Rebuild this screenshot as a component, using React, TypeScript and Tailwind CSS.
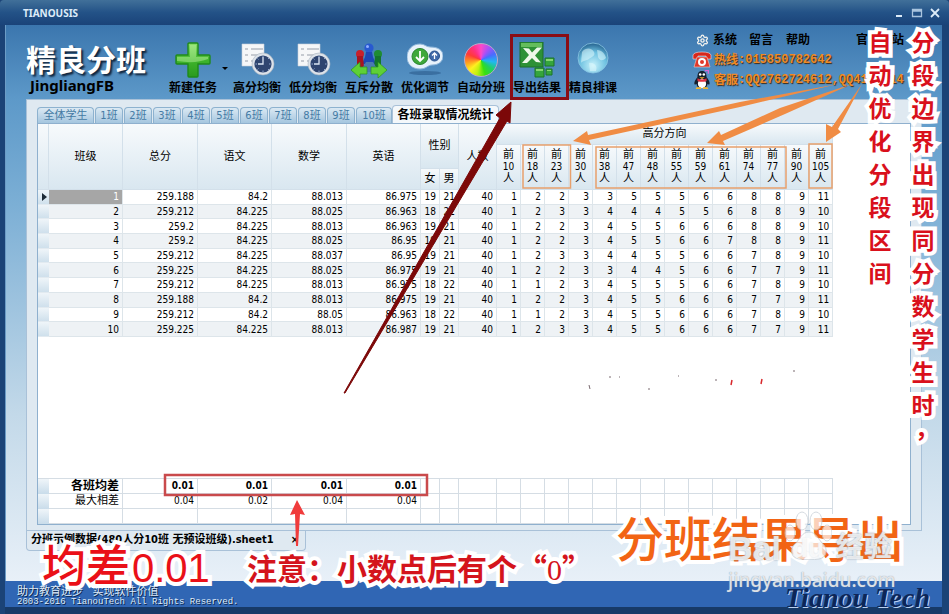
import React, { useState } from 'react';
import { Settings } from 'lucide-react';

const classTabs = ['1班', '2班', '3班', '4班', '5班', '6班', '7班', '8班', '9班', '10班'];

const ranks = [10, 18, 23, 30, 38, 47, 48, 55, 59, 61, 74, 77, 90, 105];

const rows = [
  ['1', '259.188', '84.2', '88.013', '86.975', '19', '21', '40', 1, 2, 2, 3, 3, 5, 5, 5, 6, 6, 8, 8, 9, 11],
  ['2', '259.212', '84.225', '88.025', '86.963', '18', '22', '40', 1, 2, 3, 3, 4, 4, 4, 5, 5, 6, 8, 8, 9, 10],
  ['3', '259.2', '84.225', '88.013', '86.963', '19', '21', '40', 1, 2, 2, 3, 4, 5, 5, 6, 6, 6, 8, 8, 9, 10],
  ['4', '259.2', '84.225', '88.025', '86.95', '19', '21', '40', 1, 2, 2, 3, 4, 5, 5, 6, 6, 7, 8, 8, 9, 11],
  ['5', '259.212', '84.225', '88.037', '86.95', '19', '21', '40', 1, 2, 3, 3, 4, 4, 5, 5, 6, 6, 7, 8, 9, 10],
  ['6', '259.225', '84.225', '88.025', '86.975', '19', '21', '40', 1, 2, 2, 3, 3, 4, 4, 5, 6, 6, 7, 7, 9, 11],
  ['7', '259.212', '84.225', '88.013', '86.975', '18', '22', '40', 1, 1, 2, 3, 4, 5, 5, 5, 6, 6, 7, 8, 9, 10],
  ['8', '259.188', '84.2', '88.013', '86.975', '19', '21', '40', 1, 2, 2, 3, 4, 5, 5, 6, 6, 6, 7, 7, 9, 11],
  ['9', '259.212', '84.2', '88.05', '86.963', '18', '22', '40', 1, 1, 2, 3, 4, 5, 5, 6, 6, 6, 7, 8, 9, 10],
  ['10', '259.225', '84.225', '88.013', '86.987', '19', '21', '40', 1, 2, 3, 3, 4, 5, 5, 6, 6, 6, 7, 7, 9, 11],
];

const Columns = () => (
  <colgroup>
    <col className="w-[11px]" />
    <col className="w-[74px]" />
    <col className="w-[75px]" />
    <col className="w-[74px]" />
    <col className="w-[75px]" />
    <col className="w-[74px]" />
    <col className="w-[19px]" />
    <col className="w-[19px]" />
    <col className="w-[38px]" />
    {ranks.map((r) => <col key={r} className="w-[24px]" />)}
  </colgroup>
);

const PlusIcon = () => (
  <svg viewBox="0 0 36 36" className="size-9">
    <defs>
      <linearGradient id="plus" x1="0" y1="0" x2="0" y2="1">
        <stop offset="0" stopColor="#8be06a" />
        <stop offset="0.5" stopColor="#3fb42c" />
        <stop offset="1" stopColor="#2a9a1e" />
      </linearGradient>
    </defs>
    <path d="M13 2q0-1 1-1h8q1 0 1 1v11h11q1 0 1 1v7q0 1-1 1H23v12q0 1-1 1h-8q-1 0-1-1V22H2q-1 0-1-1v-7q0-1 1-1h11z" fill="url(#plus)" stroke="#1f8a1a" strokeWidth="1.4" />
    <path d="M15 3h6v12h12v2q-12 5-31 2v-4h13z" fill="#b5f09a" opacity=".5" />
  </svg>
);

const ReportIcon = () => (
  <svg viewBox="0 0 36 36" className="size-9">
    <path d="M3 2h22v22H3z" fill="#f6f7f8" stroke="#c9d2da" strokeWidth=".6" />
    <path d="M6 7h3m3 0h12M6 13h3m3 0h9M6 19h3m3 0h4" stroke="#b6bcc2" strokeWidth="1.6" />
    <circle cx="24" cy="22" r="11" fill="#dde3ea" stroke="#aab4be" strokeWidth=".6" />
    <circle cx="24" cy="22" r="8.6" fill="#2f4570" />
    <path d="M24 15v7h-5" stroke="#dce6f4" strokeWidth="1.3" fill="none" />
    <path d="M24 14v1.5M24 28.500v1.500M16.500 22h1.500M30 22h1.500M18.500 16.500l1 1M29 27l1 1M18.500 27.500l1-1M29 17l1-1" stroke="#8fa6cc" strokeWidth="1" />
  </svg>
);

const PeopleIcon = () => (
  <svg viewBox="0 0 36 36" className="size-9">
    <circle cx="18" cy="6" r="4.600" fill="#2859d0" />
    <path d="M15 10h6l1 5 3 7H11l3-7z" fill="#1d47b5" />
    <circle cx="9" cy="12" r="4" fill="#c8202c" />
    <path d="M6 14h6l1 11H6z" fill="#a81420" />
    <circle cx="27" cy="12" r="4" fill="#1e8c32" />
    <path d="M24 14h6v11h-7z" fill="#15752a" />
    <path d="M12 25l3-5h7l3 5-3 5h-7z" fill="#4a7ab0" />
    <path d="M0 28l9-8v5h7v7H9v4z" fill="#5ed036" stroke="#2d9420" strokeWidth=".7" />
    <path d="M36 28l-9-8v5h-7v7h7v4z" fill="#5ed036" stroke="#2d9420" strokeWidth=".7" />
    <circle cx="16.500" cy="4.500" r="1.500" fill="#8fb0ff" />
  </svg>
);

const AdjustIcon = () => (
  <svg viewBox="0 0 36 36" className="size-9">
    <ellipse cx="18" cy="31" rx="16" ry="2" fill="#2b5c8c" opacity=".6" />
    <path d="M13 2c5 0 6 3 10 3 8 0 13 3 13 9s-5 9-11 9c-4 0-6 4-12 4C5 27 0 22 0 15S5 2 13 2z" fill="#e8f2fb" stroke="#8fb6da" />
    <circle cx="13" cy="14.500" r="8" fill="#3fa83a" stroke="#2b8430" />
    <path d="M13 9v10m-4-4l4 4 4-4" stroke="#fff" strokeWidth="1.8" fill="none" />
    <circle cx="27.500" cy="14" r="5" fill="#3f69a8" stroke="#27508c" />
    <path d="M27.500 17v-6m-2.500 2.500l2.500-2.500 2.500 2.500" stroke="#fff" strokeWidth="1.300" fill="none" />
  </svg>
);

const WheelIcon = () => (
  <span className="block size-[34px] rounded-full my-px border border-[#b9a8c8] bg-[conic-gradient(#ff48c8,#a850f8,#4a6cff,#20b8f0,#20d060,#38e010,#c0f010,#fff020,#ff9820,#ff3a38,#ff3080,#ff48c8)]" />
);

const ExcelIcon = () => (
  <svg viewBox="0 0 36 36" className="size-9">
    <path d="M1 0h23v25H1z" fill="#2d9136" stroke="#1d6f28" />
    <path d="M2 1h21v4H2z" fill="#64bd5c" />
    <path d="M4 6l6 .5 3 4 5-5h5l-7 8 6 7-5-.5-4-4-5 5H3l7-8z" fill="#eef8ea" />
    <path d="M26 16h9v8h-9zM16 26h9v9h-9zM27 27h6v6h-6z" fill="#35a53c" stroke="#1c7428" />
    <path d="M27 17h7v2h-7zM17 27h7v2h-7zM28 28h4v1h-4z" fill="#86d672" />
  </svg>
);

const GlobeIcon = () => (
  <svg viewBox="0 0 36 36" className="size-9">
    <defs>
      <radialGradient id="globe" cx=".5" cy=".75" r=".75">
        <stop offset="0" stopColor="#c8f2fb" />
        <stop offset=".6" stopColor="#6cc0e0" />
        <stop offset="1" stopColor="#235f8c" />
      </radialGradient>
    </defs>
    <circle cx="18" cy="16" r="15" fill="url(#globe)" stroke="#8cc8e4" strokeWidth=".8" />
    <path d="M7 10c4-5 10-4 12 0s-3 5-5 7-6 1-8 4M22 8c5 0 8 4 9 8-4 4-7 2-8-1zM14 21c5-1 9 3 7 8h-6z" fill="#dff8fc" opacity=".55" />
  </svg>
);

const tools = [
  { label: '高分均衡', icon: <ReportIcon /> },
  { label: '低分均衡', icon: <ReportIcon /> },
  { label: '互斥分散', icon: <PeopleIcon /> },
  { label: '优化调节', icon: <AdjustIcon /> },
  { label: '自动分班', icon: <WheelIcon /> },
  { label: '导出结果', icon: <ExcelIcon /> },
  { label: '精良排课', icon: <GlobeIcon /> },
];

const TitleBar = () => (
  <header className="h-[25px] shrink-0 flex items-center justify-between pl-[23px] pr-1.5 rounded-t bg-linear-to-b from-[#417099] via-[#235287] to-[#1a4379] text-[#dcebf8]">
    <h1 className="text-[10px] leading-3 font-bold font-['Noto_Sans',sans-serif]">TIANOUSIS</h1>
    <div className="flex items-center gap-0.5">
      <button aria-label="最小化" className="size-4 flex items-center justify-center">
        <svg viewBox="0 0 12 12" className="size-3"><path d="M3 9h6" stroke="#dcebf8" strokeWidth="2" /></svg>
      </button>
      <button aria-label="最大化" className="size-4 flex items-center justify-center">
        <svg viewBox="0 0 12 12" className="size-3"><path d="M1.500 2.500h9v7h-9zM1.500 4h9" stroke="#a9c4de" strokeWidth="1.300" fill="none" /></svg>
      </button>
      <button aria-label="关闭" className="size-4 flex items-center justify-center">
        <svg viewBox="0 0 12 12" className="size-3"><path d="M2 2l8 8M10 2l-8 8" stroke="#dcebf8" strokeWidth="1.800" /></svg>
      </button>
    </div>
  </header>
);

const Toolbar = () => (
  <div className="h-[74px] shrink-0 flex items-start pl-5 text-black">
    <div className="w-[139px] pt-[18px] font-bold">
      <div className="text-[30px] leading-9 whitespace-nowrap text-white [text-shadow:2px_2px_2px_#10243c]">精良分班</div>
      <div className="pl-1 text-[15px] leading-3 font-['Noto_Sans',sans-serif]">JingliangFB</div>
    </div>

    <nav className="flex pt-[17px] text-xs leading-4 font-bold whitespace-nowrap">
      <button className="w-[56px] flex flex-col items-center gap-0.5">
        <PlusIcon />
        新建任务
      </button>
      <button aria-label="更多" className="w-2 h-[52px] flex items-center justify-center">
        <span className="border-x-[3px] border-t-[3px] border-x-transparent border-t-black" />
      </button>
      {tools.map((t) => (
        <button key={t.label} className="w-[56px] flex flex-col items-center gap-0.5">
          {t.icon}
          {t.label}
        </button>
      ))}
    </nav>

    <div className="ml-auto w-[250px] pt-[5px] text-xs leading-5 font-bold whitespace-nowrap">
      <div className="flex items-center">
        <span className="w-5 flex justify-center mr-px"><Settings size={13} color="#f2f2ee" strokeWidth={2.5} /></span>
        <a href="#system" className="w-9">系统</a>
        <a href="#message" className="w-[37px]">留言</a>
        <a href="#help" className="w-[70px]">帮助</a>
        <a href="#site">官方网站</a>
      </div>
      <div className="flex items-center text-[#f08a24] [text-shadow:1px_1px_1px_#3a2a18]">
        <svg viewBox="0 0 20 18" className="w-5 h-[18px] mr-0.5">
          <path d="M1 8V4q1-3 9-3t9 3v4h-5V5H6v3z" fill="#d8281c" stroke="#fff" strokeWidth=".5" />
          <path d="M5 6h10l3 10H2z" fill="#e0382a" stroke="#f6d0c8" strokeWidth=".6" />
          <circle cx="10" cy="11" r="4" fill="#fff" />
          <circle cx="10" cy="11" r="2" fill="#e0382a" />
        </svg>
        <span>热线</span>
        <span className="font-['Liberation_Mono',monospace]">:015850782642</span>
      </div>
      <div className="flex items-center text-[#f08a24] [text-shadow:1px_1px_1px_#3a2a18]">
        <svg viewBox="0 0 20 22" className="w-5 h-[20px] mr-0.5">
          <path d="M10 1c4 0 5 3 5 7 3 3 4 7 3 8-1 0-2-1-2-1 0 2-1 3-2 4H6c-1-1-2-2-2-4 0 0-1 1-2 1-1-1 0-5 3-8 0-4 1-7 5-7z" fill="#16202e" />
          <ellipse cx="10" cy="15" rx="4.500" ry="5" fill="#fff" />
          <path d="M5 9q5 3 10 0v3q-5 2-10 0z" fill="#e03040" />
          <circle cx="8" cy="5" r="1.400" fill="#fff" />
          <circle cx="12" cy="5" r="1.400" fill="#fff" />
          <path d="M7 8h6l-3 2zM4 19h5v2H3zM11 19h5l1 2h-6z" fill="#f5b52c" />
          <path d="M13 1l4-1v4" fill="none" stroke="#d868d8" strokeWidth="1.500" />
        </svg>
        <span>客服</span>
        <span className="font-['Liberation_Mono',monospace]">:QQ2762724612,QQ4127514</span>
      </div>
    </div>
  </div>
);

const headCell = 'border-r border-b border-[#d3e0ea] p-0 font-normal align-middle bg-linear-to-b from-[#f7fafc] to-[#d9e7f0]';

const ResultTable = () => (
  <table className="w-[794px] h-[213px] table-fixed border-separate border-spacing-0 text-[10px] leading-[13px] text-right">
    <Columns />
    <thead className="text-[11px] leading-3 text-center">
      <tr className="h-[21px]">
        <th rowSpan={3} className={headCell}></th>
        <th rowSpan={3} className={headCell}>班级</th>
        <th rowSpan={3} className={headCell}>总分</th>
        <th rowSpan={3} className={headCell}>语文</th>
        <th rowSpan={3} className={headCell}>数学</th>
        <th rowSpan={3} className={headCell}>英语</th>
        <th rowSpan={2} colSpan={2} className={headCell}>性别</th>
        <th rowSpan={3} className={headCell}>人数</th>
        <th colSpan={14} className={headCell}>高分方向</th>
      </tr>
      <tr className="h-[24px]">
        {ranks.map((r) => (
          <th key={r} rowSpan={2} className={headCell}>前<br /><span className="text-[10px]">{r}</span><br />人</th>
        ))}
      </tr>
      <tr className="h-[21px]">
        <th className={headCell}>女</th>
        <th className={headCell}>男</th>
      </tr>
    </thead>
    <tbody>
      {rows.map((row, i) => (
        <tr key={i} className="odd:bg-white even:bg-[#eef2f5]">
          <td className="p-0 bg-linear-to-b from-[#eff5f9] to-[#cfe0ec] border-b border-[#e2eaf0]">
            {i === 0 && <span className="block ml-1 w-0 border-y-4 border-l-[5px] border-y-transparent border-l-[#1c2a36]" />}
          </td>
          {row.map((v, j) => (
            <td key={j} className={`p-0 pr-[3px] border-r border-b border-[#dde5ea] ${i === 0 && j === 0 ? 'bg-[#a6a6a6] text-white' : ''}`}>{v}</td>
          ))}
        </tr>
      ))}
    </tbody>
  </table>
);

const summary = [
  { label: '各班均差', values: ['0.01', '0.01', '0.01', '0.01'], style: 'font-bold' },
  { label: '最大相差', values: ['0.04', '0.02', '0.04', '0.04'], style: '' },
  { label: '', values: ['', '', '', ''], style: '' },
];

const SummaryTable = () => (
  <table className="w-[794px] table-fixed border-separate border-spacing-0 border-t border-[#d5dde4] text-[10px] leading-[14px] text-right whitespace-nowrap">
    <Columns />
    <tbody>
      {summary.map((s, i) => (
        <tr key={i} className={`h-[15px] ${s.style}`}>
          <td className="p-0 bg-linear-to-b from-[#eff5f9] to-[#c9dcea]"></td>
          <th className={`p-0 pr-[3px] border-r border-b border-[#d5dde4] text-right ${i === 0 ? 'text-xs leading-[14px] font-bold' : 'text-[11px] leading-[14px] font-normal'}`}>{s.label}</th>
          {s.values.map((v, j) => <td key={j} className="p-0 pr-[3px] border-r border-b border-[#d5dde4]">{v}</td>)}
          {Array.from({ length: 17 }, (_, j) => <td key={j} className="p-0 border-r border-b border-[#d5dde4]"></td>)}
        </tr>
      ))}
    </tbody>
  </table>
);

const outlined = "[-webkit-text-stroke:8px_white] [paint-order:stroke_fill] font-['Noto_Sans_CJK_SC',sans-serif]";

const Annotations = () => (
  <div className="absolute inset-0 pointer-events-none overflow-hidden">
    <svg width="949" height="614" viewBox="0 0 949 614" className="absolute left-0 top-0 max-w-none">
      <g fill="none" stroke="#e8a06c" strokeWidth="1.500">
        <path d="M523 145h47.500v43H523zM596 147h190v41H596zM809 144h23v44h-23z" />
      </g>
      <g fill="#f08c44">
        <path d="M573 141L587 131L588 135L740 102L838 84L740 107L589 140L591 145z" />
        <path d="M707 143L719 131L721 135L780 108L852 84L785 114L723 141L725 145z" />
        <path d="M826 142L826 124L832 127L862 84L838 129L841 132z" />
      </g>
      <path d="M344 393L500 118l-4-3 15-13-1 21-3-2-162 272z" fill="#7c0808" stroke="#7c0808" />
      <path d="M511.500 35.500h56v63h-56z" fill="none" stroke="#8a0c14" strokeWidth="3" />
      <path d="M165 475h262v20H165z" fill="none" stroke="#c94a4c" strokeWidth="2.500" />
      <path d="M297 500l8 15-5-1-2 32h-2l-1-32-5 1z" fill="#f03c3c" />
      <path d="M732 380l-1 5M762 379l-1 5" stroke="#d8282c" strokeWidth="1.500" />
      <path d="M589 385l1 4M609 377h2M619 377h1M648 389h2M678 376h1M715 380h2M793 371h2" stroke="#7a6a70" strokeWidth="1" />
    </svg>

    <p className={`absolute left-[864px] top-[25px] w-8 text-center text-[23px] leading-[33px] font-bold text-[#d9101c] break-all ${outlined}`}>自动优化分段区间</p>
    <p className={`absolute left-[907px] top-[25px] w-8 text-center text-[23px] leading-[33px] font-bold text-[#d9101c] break-all ${outlined}`}>
      分段边界出现同分数学生时
      <span className="block pl-2 leading-3 text-left">，</span>
    </p>

    <p className={`absolute left-[42px] top-[540px] text-[44px] leading-[46px] font-medium text-[#ea1018] whitespace-nowrap ${outlined}`}>
      均差<span className="text-[40px] font-['Liberation_Sans',sans-serif] ml-0.5">0.01</span>
    </p>
    <p lang="zh-CN" className={`absolute left-[247px] top-[549px] text-[30px] leading-9 font-bold text-[#d4141c] whitespace-nowrap ${outlined}`}>
      注意：小数点后有个“<span className="font-normal font-['Liberation_Serif',serif]">0</span>”
    </p>
    <p className={`absolute left-[616px] top-[506px] text-[48px] leading-[60px] font-medium text-[#f26414] whitespace-nowrap ${outlined}`}>分班结果导出</p>

    <div className="absolute left-[728px] top-[510px] text-white/75">
      <svg viewBox="0 0 50 50" className="absolute left-[54px] top-0 size-[50px]" fill="#ffffff" stroke="#c4ccd4" opacity=".7">
        <ellipse cx="20" cy="11" rx="6" ry="9" />
        <ellipse cx="34" cy="11" rx="6" ry="9" />
        <ellipse cx="8" cy="23" rx="5" ry="8" />
        <ellipse cx="45" cy="23" rx="5" ry="8" />
        <path d="M27 22c7 0 9 7 14 12 6 6 3 14-4 15-5 1-15 1-20 0-8-1-10-10-4-15 5-5 7-12 14-12z" />
      </svg>
      <div className="flex items-center pt-[20px] h-[56px] text-[34px] leading-[36px] font-bold whitespace-nowrap [text-shadow:0_0_2px_#8f9aa6]">
        <span className="w-[64px] font-['Liberation_Sans',sans-serif]">Bai</span>
        <span className="w-[44px] text-[26px] font-['Liberation_Sans',sans-serif]">du</span>
        <span className="text-[28px]">经验</span>
      </div>
      <div className="text-[19px] leading-7 font-medium font-['Noto_Sans',sans-serif] [text-shadow:0_0_1px_#7d8c9c]">jingyan.baidu.com</div>
    </div>
  </div>
);

const App: React.FC = () => {
  const [active, setActive] = useState('summary');

  return (
    <div className="relative min-h-screen flex flex-col bg-[#1b4377] text-black font-['DejaVu_Sans_Condensed','Noto_Sans_CJK_SC',sans-serif]">
      <TitleBar />

      <main className="flex-1 flex flex-col ml-[5px] mr-[7px] border-l border-[#6c9cc6] bg-[linear-gradient(#3b76ae_0px,#5d99c9_74px,#7cafd5_180px,#c3d9e9_390px,#e8f0f8_100%)]">
        <Toolbar />

        <section className="flex-1 flex flex-col ml-5 mr-5 border border-[#a9c1d8] bg-[#dfe9f1] pl-[10px] pr-[10px] pt-[5px] pb-[5px]">
          <div className="flex items-end gap-px h-[18px] text-[11px] leading-[15px] text-[#457ba4] whitespace-nowrap">
            <button onClick={() => setActive('all')} className="w-[57px] h-4 rounded-t border border-b-0 border-[#8db2cf] bg-linear-to-b from-[#dbe9f3] to-[#a5c6df]">全体学生</button>
            {classTabs.map((t) => (
              <button
                key={t}
                onClick={() => setActive(t)}
                className={`h-4 rounded-t border border-b-0 border-[#8db2cf] bg-linear-to-b from-[#dbe9f3] to-[#a5c6df] ${t === '10班' ? 'w-[36px]' : 'w-[28px]'}`}
              >
                {t}
              </button>
            ))}
            <button
              onClick={() => setActive('summary')}
              className={`h-[18px] w-[107px] -ml-px rounded-t border border-b-0 border-[#a9c1d8] text-xs leading-4 text-black ${active === 'summary' ? 'font-bold bg-[#f4f8fb]' : 'bg-[#dbe9f3]'}`}
            >
              各班录取情况统计
            </button>
          </div>

          <div className="flex-1 flex flex-col justify-between border border-[#8fb0ce] bg-white">
            <ResultTable />
            <SummaryTable />
          </div>
        </section>

        <div className="h-[50px] shrink-0 ml-5">
          <div className="w-[280px] h-5 flex items-center justify-between px-1 border border-t-0 border-[#a9c1d8] rounded-b bg-[#dfe9f1] text-[11px] font-bold whitespace-nowrap">
            <span>分班示例数据(480人分10班 无预设班级).sheet1</span>
            <button aria-label="关闭表格" className="px-0.5">×</button>
          </div>
        </div>
      </main>

      <footer className="h-[33px] shrink-0 ml-[5px] mr-[7px] border-b-[7px] border-[#173a68] bg-[#3066b4] pl-3 pr-3 flex items-center justify-between">
        <div className="pt-1 text-[11px] leading-[11px] text-[#dfeaf7] [text-shadow:1px_1px_0_#0c2348] whitespace-pre">
          <div>助力教育进步   实现软件价值</div>
          <div className="text-[9px] leading-[10px] font-['Liberation_Mono',monospace]">2003-2016 TianouTech All Rights Reserved.</div>
        </div>
        <div className="pt-2 text-[28px] leading-6 font-bold italic text-[#0d2658] font-['Liberation_Serif',serif] [text-shadow:1px_1px_0_#b8d0f0]">Tianou Tech</div>
      </footer>

      <Annotations />
    </div>
  );
};

export default App;
